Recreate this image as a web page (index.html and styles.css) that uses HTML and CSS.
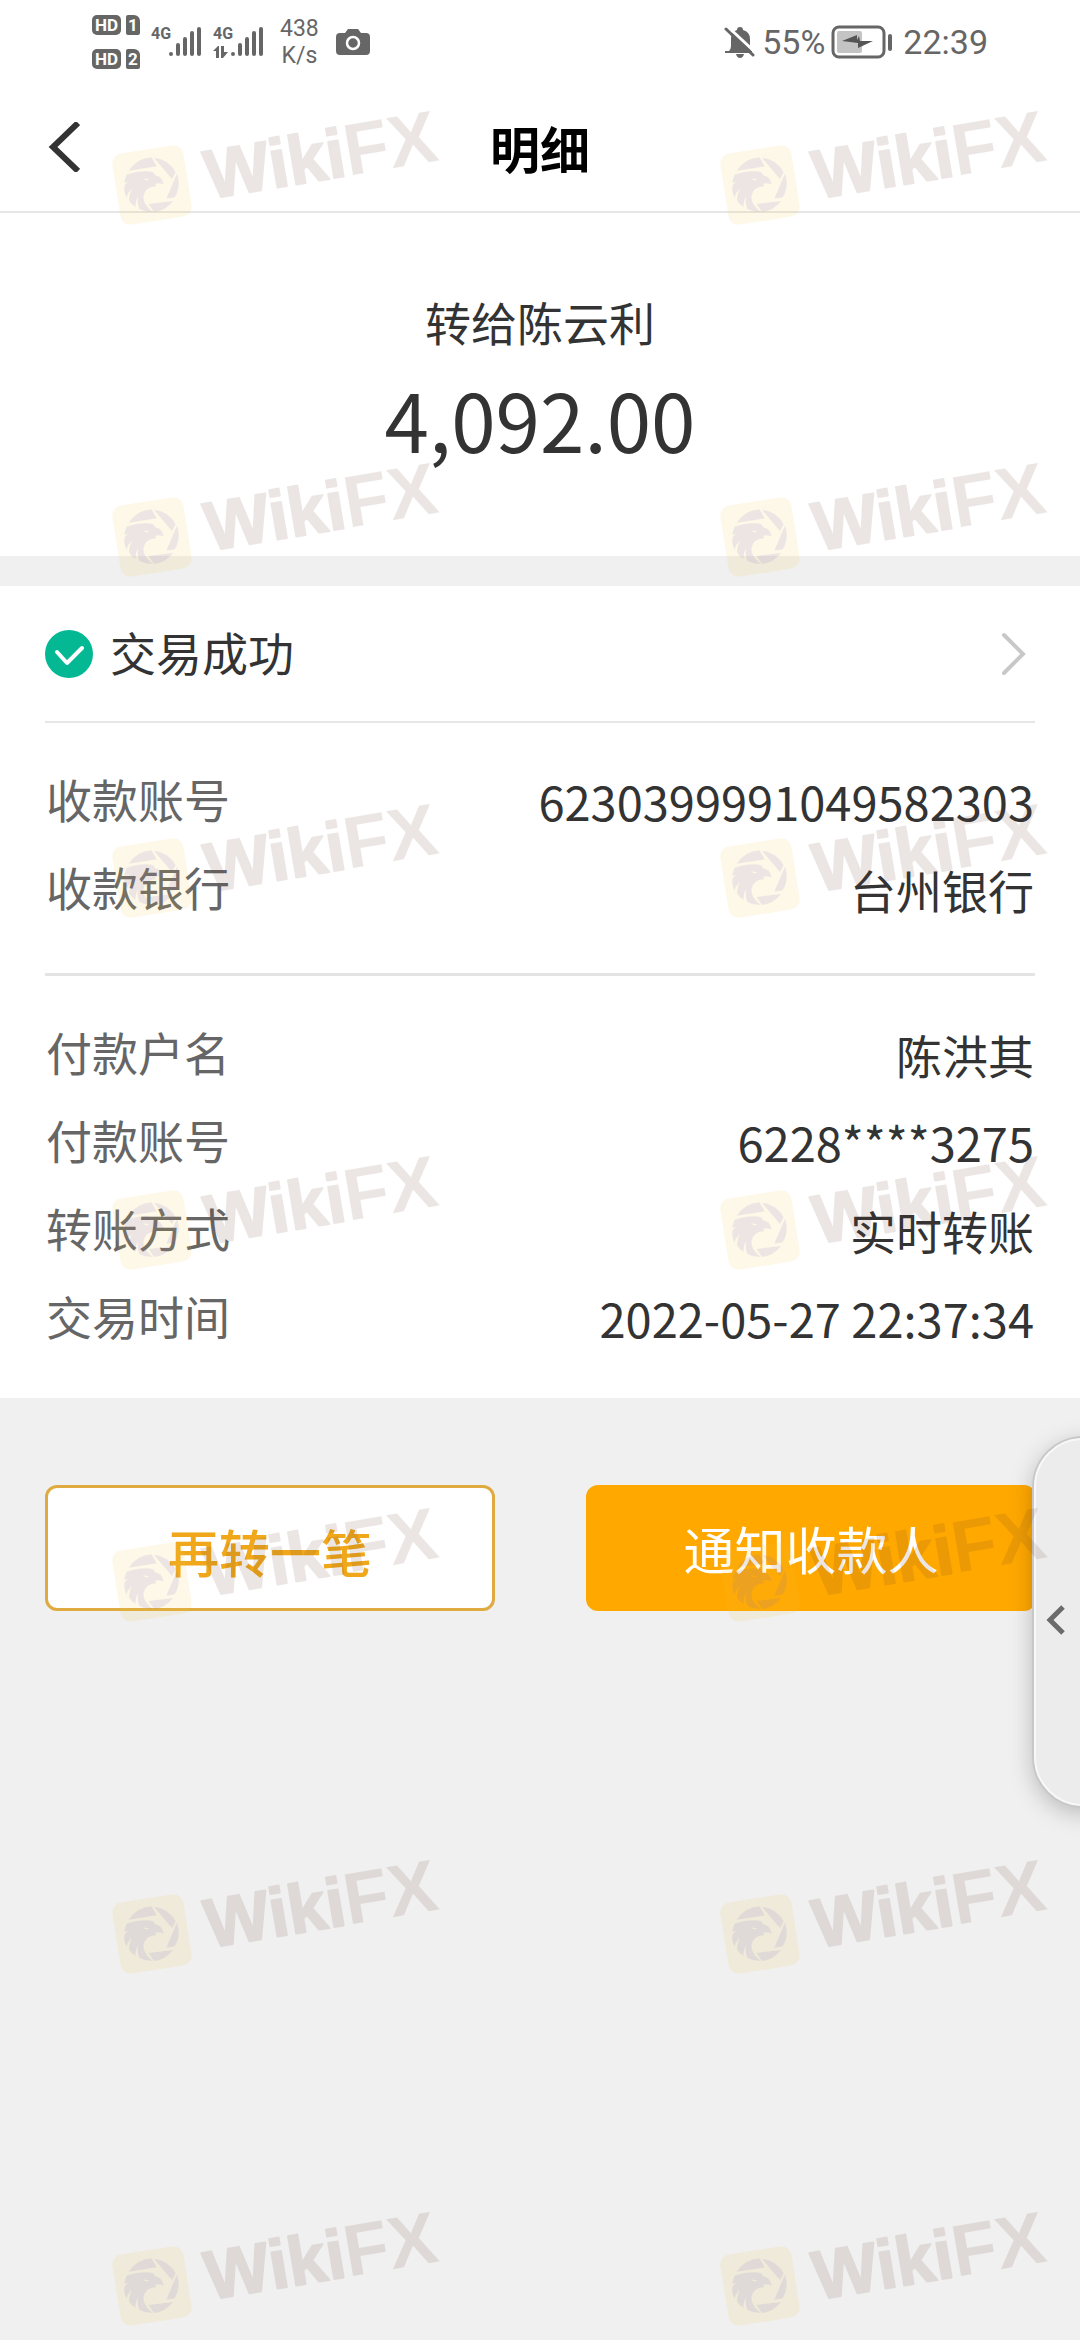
FILE: index.html
```html
<!DOCTYPE html>
<html lang="zh-CN">
<head>
<meta charset="utf-8">
<meta name="viewport" content="width=device-width, initial-scale=1">
<title>明细</title>
<link rel="stylesheet" href="styles.css">
</head>
<body>

<!-- Status bar -->
<div class="status">
<div class="status-left">
<div class="sims">
<div class="sim"><span class="hd">HD</span><span class="slot">1</span></div>
<div class="sim"><span class="hd">HD</span><span class="slot">2</span></div>
</div>
<div class="signal">
<span class="net">4G</span>
<svg class="bars" width="34" height="32" viewBox="0 0 34 32"><path d="M3 28v0M10 19v9M17 13v15M24 7v21M31 3v25"/></svg>
</div>
<div class="signal">
<span class="net">4G</span>
<svg class="bars" width="34" height="32" viewBox="0 0 34 32"><path d="M3 28v0M10 19v9M17 13v15M24 7v21M31 3v25"/></svg>
<svg class="arrows" width="16" height="12" viewBox="0 0 16 12"><path d="M0 5L5 0h1v12H3V5zM8 0h3v6h4l-5 6H8z"/></svg>
</div>
<div class="speed">438<br>K/s</div>
<svg class="camera" width="34" height="26" viewBox="0 0 34 26"><path fill="#666" d="M4 4h5l3-4h10l3 4h5q4 0 4 4v14q0 4-4 4H4q-4 0-4-4V8q0-4 4-4z"/><circle cx="17" cy="14" r="6" fill="none" stroke="#fff" stroke-width="2.5"/></svg>
</div>
<div class="status-right">
<svg width="32" height="32" viewBox="0 0 32 32"><path fill="#666" d="M5 25q2-2 2-5v-8q0-6 6-8 0-3 3-3t3 3q7 2 7 9v8q0 3 2 4v2H1v-2zM12 28h8q-1 4-4 4t-4-4z"/><path stroke="#fff" stroke-width="3" d="M4 1l28 26"/><path stroke="#666" stroke-width="3" stroke-linecap="round" d="M2 3l27 26"/></svg>
<span class="percent">55%</span>
<svg class="battery" width="62" height="34" viewBox="0 0 62 34"><rect x="2" y="2" width="51" height="30" rx="6" fill="none" stroke="#666" stroke-width="3"/><rect x="6" y="6" width="25" height="22" rx="2" fill="#c4c4c4"/><path fill="#555" d="M11 16l15-6v5l2-4 1 5h13l-15 7v-5z"/><rect x="57" y="9" width="4" height="17" rx="2" fill="#666"/></svg>
<span>22:39</span>
</div>
</div>

<!-- Title bar -->
<header class="header">
<button class="back" aria-label="返回"><svg width="34" height="50" viewBox="0 0 34 50"><path d="M32 1L7 25l25 24"/></svg></button>
<h1>明细</h1>
</header>

<main>
<section class="summary">
<p class="payee">转给陈云利</p>
<p class="amount">4,092.00</p>
</section>

<section class="details">
<a class="result" href="#">
<svg width="48" height="48" viewBox="0 0 48 48"><circle cx="24" cy="24" r="24" fill="#03b893"/><path d="M12 22l10 11 15-15" fill="none" stroke="#fff" stroke-width="4" stroke-linecap="round" stroke-linejoin="round"/></svg>
<span>交易成功</span>
<svg class="more" width="26" height="44" viewBox="0 0 26 44"><path d="M3 3l19 19L3 41"/></svg>
</a>
<dl class="rows">
<div class="row"><dt>收款账号</dt><dd class="num">6230399991049582303</dd></div>
<div class="row"><dt>收款银行</dt><dd>台州银行</dd></div>
</dl>
<dl class="rows">
<div class="row"><dt>付款户名</dt><dd>陈洪其</dd></div>
<div class="row"><dt>付款账号</dt><dd class="num">6228****3275</dd></div>
<div class="row"><dt>转账方式</dt><dd>实时转账</dd></div>
<div class="row"><dt>交易时间</dt><dd class="num">2022-05-27 22:37:34</dd></div>
</dl>
</section>

<div class="actions">
<button class="btn btn-again">再转一笔</button>
<button class="btn btn-notify">通知收款人</button>
</div>
</main>

<!-- Slide-out handle on the right edge -->
<button class="handle" aria-label="展开"><svg width="20" height="30" viewBox="0 0 20 30"><path d="M17 2L4 15l13 13"/></svg></button>

<!-- Watermark -->
<svg width="0" height="0" class="defs">
<symbol id="mark" viewBox="0 0 336 126" overflow="visible">
<rect x="-36" y="-36" width="72" height="72" rx="10" fill="#f4c53f" opacity=".12" transform="translate(44 79) rotate(-9)"/>
<g transform="translate(44 79) scale(.333)" fill="#6f62c8" opacity=".12">
<path d="M-70-43Q-45-80-2-83L14-56zM6-82A83 83 0 0 1 71-38L60-18zM75-34A83 83 0 0 1 68 37L43 41zM63 48A83 83 0 0 1 6 81L-10 57z"/>
<path fill-rule="evenodd" d="M-76-31Q-30-46 2-39L10-29Q30-26 35-1Q22-8 8-3L14 3Q-22 5-26 35Q-26 58 1 80Q-22 81-38 71Q-46 52-41 33Q-52 48-49 66Q-62 60-69 46Q-69 26-59 11Q-74 23-77 38Q-86 18-82 1Q-76-8-67-12L-83-6Q-82-18-76-31zM-27-20Q-18-10-8-18Q-16-17-27-20z"/>
</g>
<text class="mark-text" x="0" y="0" transform="translate(101 93) rotate(-9.5)"><tspan class="mark-round">Wiki</tspan><tspan class="mark-bold">FX</tspan></text>
</symbol>
</svg>
<div class="marks" aria-hidden="true">
<div class="mark-row"><svg><use href="#mark"/></svg><svg><use href="#mark"/></svg></div>
<div class="mark-row short"><svg><use href="#mark"/></svg><svg><use href="#mark"/></svg></div>
<div class="mark-row"><svg><use href="#mark"/></svg><svg><use href="#mark"/></svg></div>
<div class="mark-row"><svg><use href="#mark"/></svg><svg><use href="#mark"/></svg></div>
<div class="mark-row"><svg><use href="#mark"/></svg><svg><use href="#mark"/></svg></div>
<div class="mark-row"><svg><use href="#mark"/></svg><svg><use href="#mark"/></svg></div>
<div class="mark-row"><svg><use href="#mark"/></svg><svg><use href="#mark"/></svg></div>
</div>

</body>
</html>
```
FILE: styles.css
```css
* {
box-sizing: border-box;
}
body {
margin: 0;
min-height: 100vh;
position: relative;
overflow-x: hidden;
background-color: #f0f0f0;
color: #333;
font-family: "Noto Sans CJK SC", sans-serif;
font-size: 46px;
}
h1, p, dl, dd {
margin: 0;
}
button {
font-family: inherit;
cursor: pointer;
}

/* status bar */
.status {
display: flex;
justify-content: space-between;
height: 88px;
padding: 0 92px 4px;
background-color: #fff;
color: #666;
font-family: Roboto, sans-serif;
}
.status-left, .status-right {
display: flex;
align-items: center;
}
.status-right {
font-size: 34px;
}
.percent {
margin: 0 6px;
}
.battery {
margin-right: 10px;
}
.sims {
display: flex;
flex-direction: column;
gap: 14px;
}
.sim {
display: flex;
gap: 5px;
}
.hd, .slot {
height: 20px;
background-color: #666;
border-radius: 5px;
color: #fff;
font-size: 17px;
line-height: 20px;
font-weight: bold;
text-align: center;
}
.hd {
width: 29px;
}
.slot {
width: 14px;
border-radius: 2px 6px 2px 2px;
}
.signal {
position: relative;
display: flex;
margin-left: 11px;
}
.net {
width: 17px;
font-size: 16px;
line-height: 16px;
font-weight: bold;
}
.bars {
fill: none;
stroke: #666;
stroke-width: 4;
stroke-linecap: round;
}
.arrows {
position: absolute;
left: 0;
bottom: 0;
fill: #666;
}
.speed {
margin-left: 16px;
font-size: 23px;
line-height: 27px;
text-align: center;
}
.camera {
margin-left: 17px;
}

/* title bar */
.header {
position: relative;
display: flex;
justify-content: center;
align-items: center;
height: 125px;
padding-bottom: 6px;
background-color: #fff;
border-bottom: 2px solid #e6e6e6;
}
.header h1 {
color: #000;
font-size: 50px;
line-height: 60px;
font-weight: bold;
}
.back {
position: absolute;
left: 46px;
top: 34px;
height: 50px;
padding: 0;
border: 0;
background: none;
}
.back path {
fill: none;
stroke: #333;
stroke-width: 6;
}

.summary {
padding: 78px 45px 88px;
background-color: #fff;
text-align: center;
}
.payee {
line-height: 60px;
}
.amount {
margin-top: 17px;
font-size: 80px;
line-height: 100px;
}

/* details */
.details {
margin-top: 30px;
padding: 0 45px;
background-color: #fff;
}
.result {
display: flex;
align-items: center;
height: 137px;
border-bottom: 2px solid #e6e6e6;
color: #333;
text-decoration: none;
}
.result span {
flex: 1;
margin-left: 17px;
padding-bottom: 6px;
}
.more {
margin-right: 8px;
}
.more path {
fill: none;
stroke: #c8c8c8;
stroke-width: 4;
stroke-linecap: round;
}
.rows {
padding: 31px 1px 43px;
}
.rows + .rows {
padding-bottom: 39px;
border-top: 3px solid #e4e4e4;
}
.row {
display: flex;
justify-content: space-between;
line-height: 88px;
}
.row dt {
color: #666;
}
.row dd {
height: 88px;
padding-top: 3px;
}
.row .num {
font-size: 47px;
}

/* buttons */
.actions {
display: flex;
gap: 91px;
padding: 87px 44px 0 45px;
}
.btn {
flex: 1;
height: 126px;
padding: 0;
border: 3px solid #dfab40;
border-radius: 12px;
font-size: 51px;
}
.btn-again {
padding-top: 6px;
background-color: #fff;
color: #f0a81a;
font-weight: 500;
}
.btn-notify {
border-color: #ffa800;
background-color: #ffa800;
color: #fff;
}

.handle {
position: absolute;
top: 1438px;
right: -52px;
width: 98px;
height: 368px;
padding: 0 0 0 10px;
border: 2px solid #f8f8f8;
border-radius: 50px;
background-color: #ececec;
box-shadow: 0 0 0 2px #c8c8c8, 0 6px 24px rgba(0, 0, 0, .25);
text-align: left;
}
.handle path {
fill: none;
stroke: #6b6b6b;
stroke-width: 5;
}

/* watermark */
.defs {
position: absolute;
}
.marks {
position: absolute;
inset: 0;
padding: 106px 0 0 108px;
overflow: hidden;
pointer-events: none;
}
.mark-row {
display: flex;
gap: 272px;
height: 352px;
}
.mark-row.short {
height: 341px;
}
.mark-row svg {
flex: none;
width: 336px;
height: 126px;
overflow: visible;
}
.mark-text {
fill: #643c2d;
stroke: #643c2d;
stroke-linejoin: round;
opacity: .12;
font-family: "Liberation Sans", sans-serif;
font-weight: bold;
}
.mark-round {
font-size: 69px;
stroke-width: 2px;
}
.mark-bold {
font-size: 73px;
stroke-width: 0;
}
```
